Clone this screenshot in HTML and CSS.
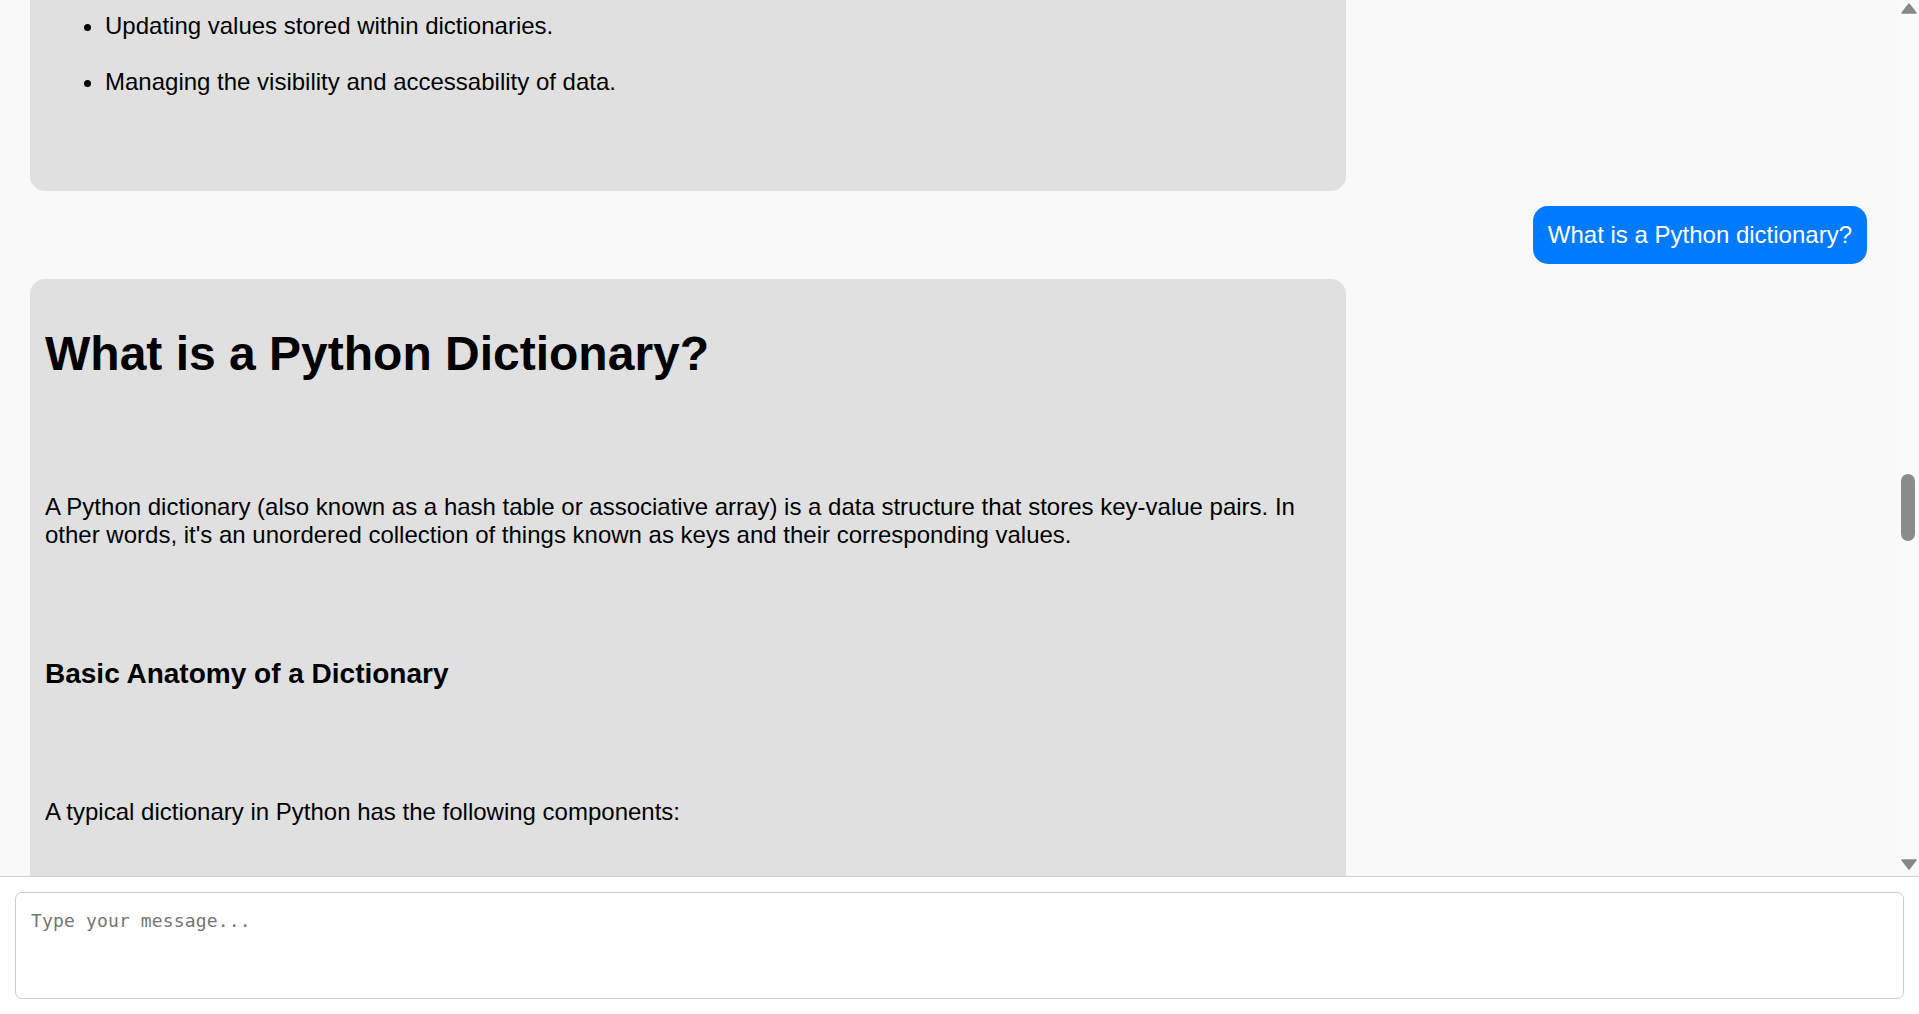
FILE: index.html
```html
<!DOCTYPE html>
<html lang="en">
<head>
<meta charset="utf-8">
<title>Chat</title>
<link rel="stylesheet" href="styles.css">
</head>
<body>
<div class="chat-area">
  <div class="messages" id="messages">
    <div class="msg user">How are dictionaries used in Python?</div>
    <div class="msg bot">
      <p>Dictionaries are one of the most useful built-in types in Python. Common uses include:</p>
      <ul>
        <li>Storing and retrieving data using unique keys.</li>
        <li>Counting occurrences of items in a collection.</li>
        <li>Updating values stored within dictionaries.</li>
        <li>Managing the visibility and accessability of data.</li>
      </ul>
    </div>
    <div class="msg user">What is a Python dictionary?</div>
    <div class="msg bot" id="current">
      <h1>What is a Python Dictionary?</h1>
      <p>A Python dictionary (also known as a hash table or associative array) is a data structure that stores key-value pairs. In other words, it's an unordered collection of things known as keys and their corresponding values.</p>
      <h3>Basic Anatomy of a Dictionary</h3>
      <p>A typical dictionary in Python has the following components:</p>
      <ul>
        <li>Keys: unique, immutable identifiers such as strings or numbers.</li>
        <li>Values: the data associated with each key.</li>
        <li>Curly braces that enclose the key-value pairs.</li>
        <li>Colons that separate each key from its value.</li>
      </ul>
    </div>
  </div>
  <div class="scrollbar">
    <div class="sb-button">
      <svg width="22" height="22" viewBox="0 0 22 22"><polygon points="5,13 12,4 19,13" fill="#888" stroke="#888" stroke-width="1.5" stroke-linejoin="round"/></svg>
    </div>
    <div class="sb-track">
      <div class="sb-thumb" style="margin-top: 452px"></div>
    </div>
    <div class="sb-button">
      <svg width="22" height="22" viewBox="0 0 22 22"><polygon points="5,6 19,6 12,15" fill="#888" stroke="#888" stroke-width="1.5" stroke-linejoin="round"/></svg>
    </div>
  </div>
</div>
<div class="input-area">
  <textarea class="input" placeholder="Type your message..."></textarea>
</div>
<script src="script.js"></script>
</body>
</html>
```

FILE: styles.css
```css
html, body {
  margin: 0;
  height: 100%;
}

body {
  display: flex;
  flex-direction: column;
  font-family: "Liberation Sans", Arial, sans-serif;
  font-size: 24px;
  color: #000;
  background: #ffffff;
  overflow: hidden;
}

.chat-area {
  flex: 1;
  min-height: 0;
  display: flex;
  background: #f9f9f9;
  border-bottom: 1px solid #d3d3d3;
}

.messages {
  position: relative;
  flex: 1;
  min-width: 0;
  overflow: hidden;
  display: flex;
  flex-direction: column;
  gap: 15px;
  padding: 30px;
}

.msg {
  flex: none;
  border-radius: 15px;
  padding: 15px;
}

.user {
  align-self: flex-end;
  max-width: 70%;
  background: #007bff;
  color: #fff;
}

.bot {
  align-self: flex-start;
  width: 70%;
  background: #e0e0e0;
}

.bot h1 {
  font-size: 48px;
  font-weight: bold;
  margin: 32px 0 112px;
}

.bot h3 {
  font-size: 28px;
  font-weight: bold;
  margin: 109px 0 108px;
}

.bot p {
  margin: 0;
}

.bot ul {
  margin: 24px 0 80px;
  padding-left: 60px;
}

.bot p + ul {
  margin-top: 104px;
}

.bot li {
  margin-bottom: 28px;
}

.bot li:last-child {
  margin-bottom: 0;
}

.scrollbar {
  flex: none;
  width: 22px;
  display: flex;
  flex-direction: column;
  background: #fafafa;
}

.sb-button {
  height: 22px;
  flex: none;
}

.sb-button svg {
  display: block;
}

.sb-track {
  flex: 1;
  display: flex;
  flex-direction: column;
  align-items: center;
}

.sb-thumb {
  width: 14px;
  height: 67px;
  border-radius: 7px;
  background: #8b8b8b;
}

.input-area {
  flex: none;
  padding: 15px;
  background: #fff;
}

.input {
  display: block;
  width: 100%;
  height: 107px;
  box-sizing: border-box;
  padding: 17px 15px 13px;
  border: 1px solid #ccc;
  border-radius: 7px;
  font-family: "DejaVu Sans Mono", monospace;
  font-size: 18px;
  letter-spacing: 0.15px;
  resize: none;
  outline: none;
  background: #fff;
}

.input::placeholder {
  color: #757575;
}
```

FILE: script.js
```js
(function () {
  var box = document.getElementById('messages');
  var current = document.getElementById('current');
  var delta = current.getBoundingClientRect().top - 279;
  box.scrollTop = box.scrollTop + delta;
})();
```
